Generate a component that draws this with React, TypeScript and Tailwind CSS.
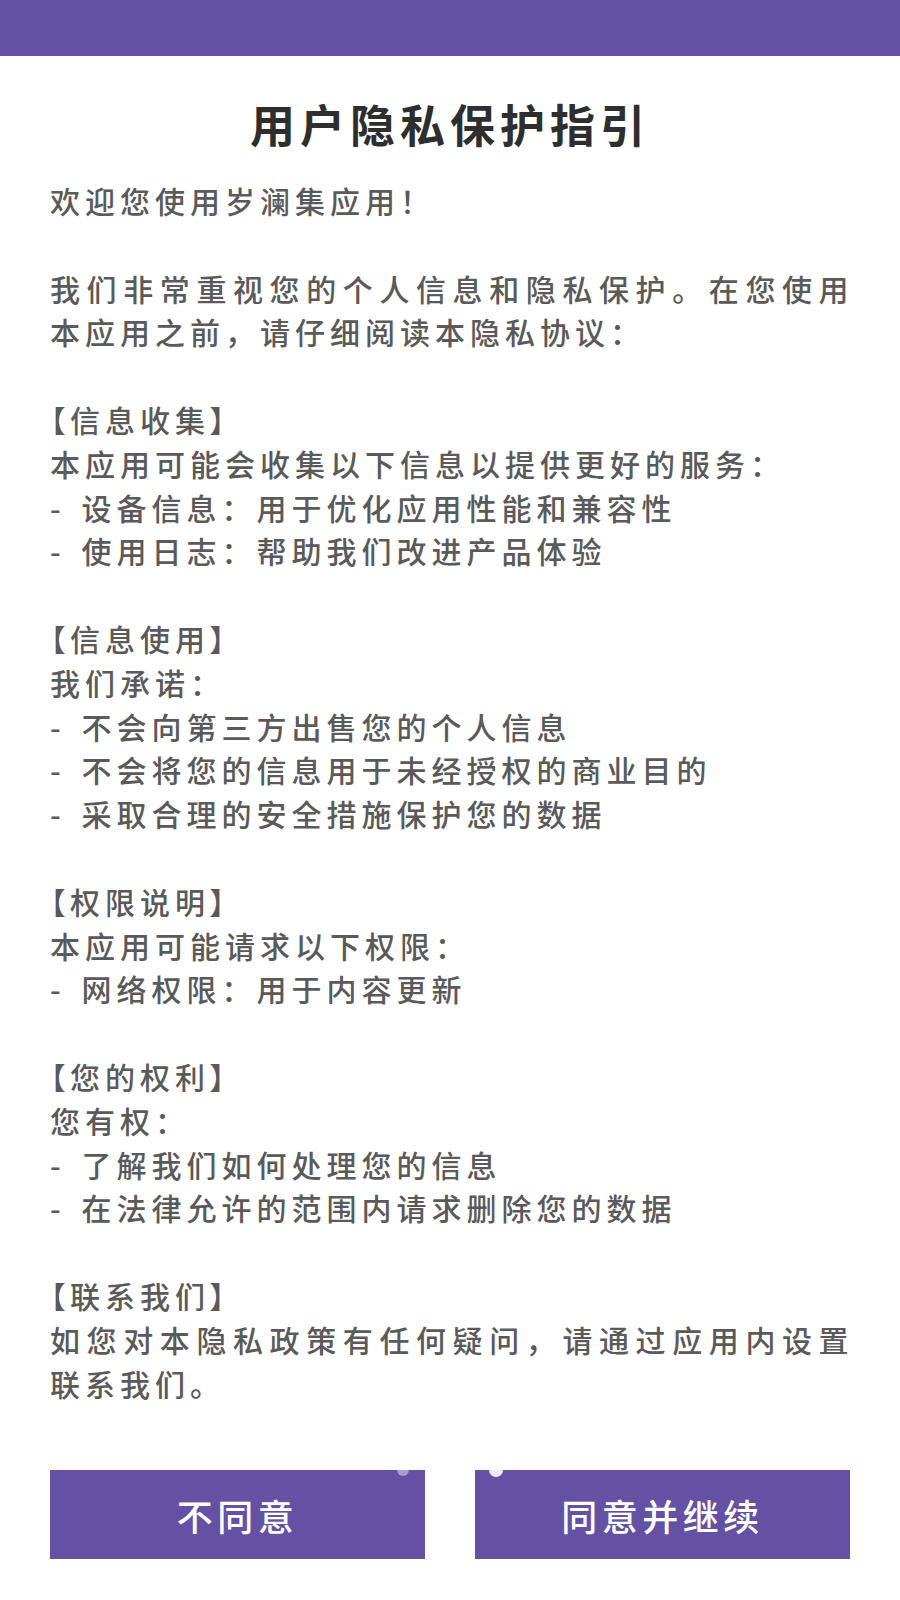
import React from "react";

// Body lines of the privacy notice; empty string = blank line.
// `wide` lines are the wrapped ones that get stretched to the full width.
const lines: { text: string; wide?: boolean }[] = [
    { text: "欢迎您使用岁澜集应用！" },
    { text: "" },
    { text: "我们非常重视您的个人信息和隐私保护。在您使用", wide: true },
    { text: "本应用之前，请仔细阅读本隐私协议：" },
    { text: "" },
    { text: "【信息收集】" },
    { text: "本应用可能会收集以下信息以提供更好的服务：" },
    { text: "- 设备信息：用于优化应用性能和兼容性" },
    { text: "- 使用日志：帮助我们改进产品体验" },
    { text: "" },
    { text: "【信息使用】" },
    { text: "我们承诺：" },
    { text: "- 不会向第三方出售您的个人信息" },
    { text: "- 不会将您的信息用于未经授权的商业目的" },
    { text: "- 采取合理的安全措施保护您的数据" },
    { text: "" },
    { text: "【权限说明】" },
    { text: "本应用可能请求以下权限：" },
    { text: "- 网络权限：用于内容更新" },
    { text: "" },
    { text: "【您的权利】" },
    { text: "您有权：" },
    { text: "- 了解我们如何处理您的信息" },
    { text: "- 在法律允许的范围内请求删除您的数据" },
    { text: "" },
    { text: "【联系我们】" },
    { text: "如您对本隐私政策有任何疑问，请通过应用内设置", wide: true },
    { text: "联系我们。" },
];

function Line({ text, wide }: { text: string; wide?: boolean }) {
    if (!text) return <div className="h-[43.8px]" />;
    // section headings: brackets are set half-width like the original font
    if (text.startsWith("【")) {
        return (
            <div className="whitespace-nowrap tracking-[5px]">
                <span className="[font-feature-settings:'palt']">【</span>
                {text.slice(1, -1)}
                <span className="[font-feature-settings:'palt']">】</span>
            </div>
        );
    }
    // list items: the dash sits a little further from the text
    if (text.startsWith("- ")) {
        return (
            <div className="whitespace-nowrap tracking-[5px]">
                <span className="mr-[4px]">-</span> {text.slice(2)}
            </div>
        );
    }
    return (
        <div className={wide ? "whitespace-nowrap tracking-[6.6px]" : "whitespace-nowrap tracking-[5px]"}>
            {text}
        </div>
    );
}

export default function App() {
    const font = { fontFamily: '"Noto Sans CJK SC", "Noto Sans", sans-serif' };

    return (
        <div className="w-[900px] h-[1600px] bg-white" style={font}>
            <div className="h-[56px] bg-[#6351a2]" />

            <h1 className="mt-[40px] text-center text-[45px] leading-[56px] font-bold tracking-[5px] text-[#2e2e2e]">
                用户隐私保护指引
            </h1>

            <div className="mt-[27px] pl-[50px] text-[30px] leading-[43.8px] font-medium text-[#5a5a5a]">
                {lines.map((l, i) => (
                    <Line key={i} text={l.text} wide={l.wide} />
                ))}
            </div>

            <div className="mt-[65px] px-[50px] flex gap-[50px]">
                <button
                    type="button"
                    className="relative overflow-hidden flex-1 h-[89px] bg-[#6451a3] text-white text-[36px] font-medium tracking-[4.5px] flex items-center justify-center"
                >
                    <span className="absolute -top-[6px] left-[347px] w-[12px] h-[12px] rounded-full bg-[#a99bd3]" />
                    不同意
                </button>
                <button
                    type="button"
                    className="relative overflow-hidden flex-1 h-[89px] bg-[#6451a3] text-white text-[36px] font-medium tracking-[4.5px] flex items-center justify-center"
                >
                    <span className="absolute -top-[7px] left-[14px] w-[14px] h-[14px] rounded-full bg-[#eeebf7]" />
                    同意并继续
                </button>
            </div>
        </div>
    );
}
